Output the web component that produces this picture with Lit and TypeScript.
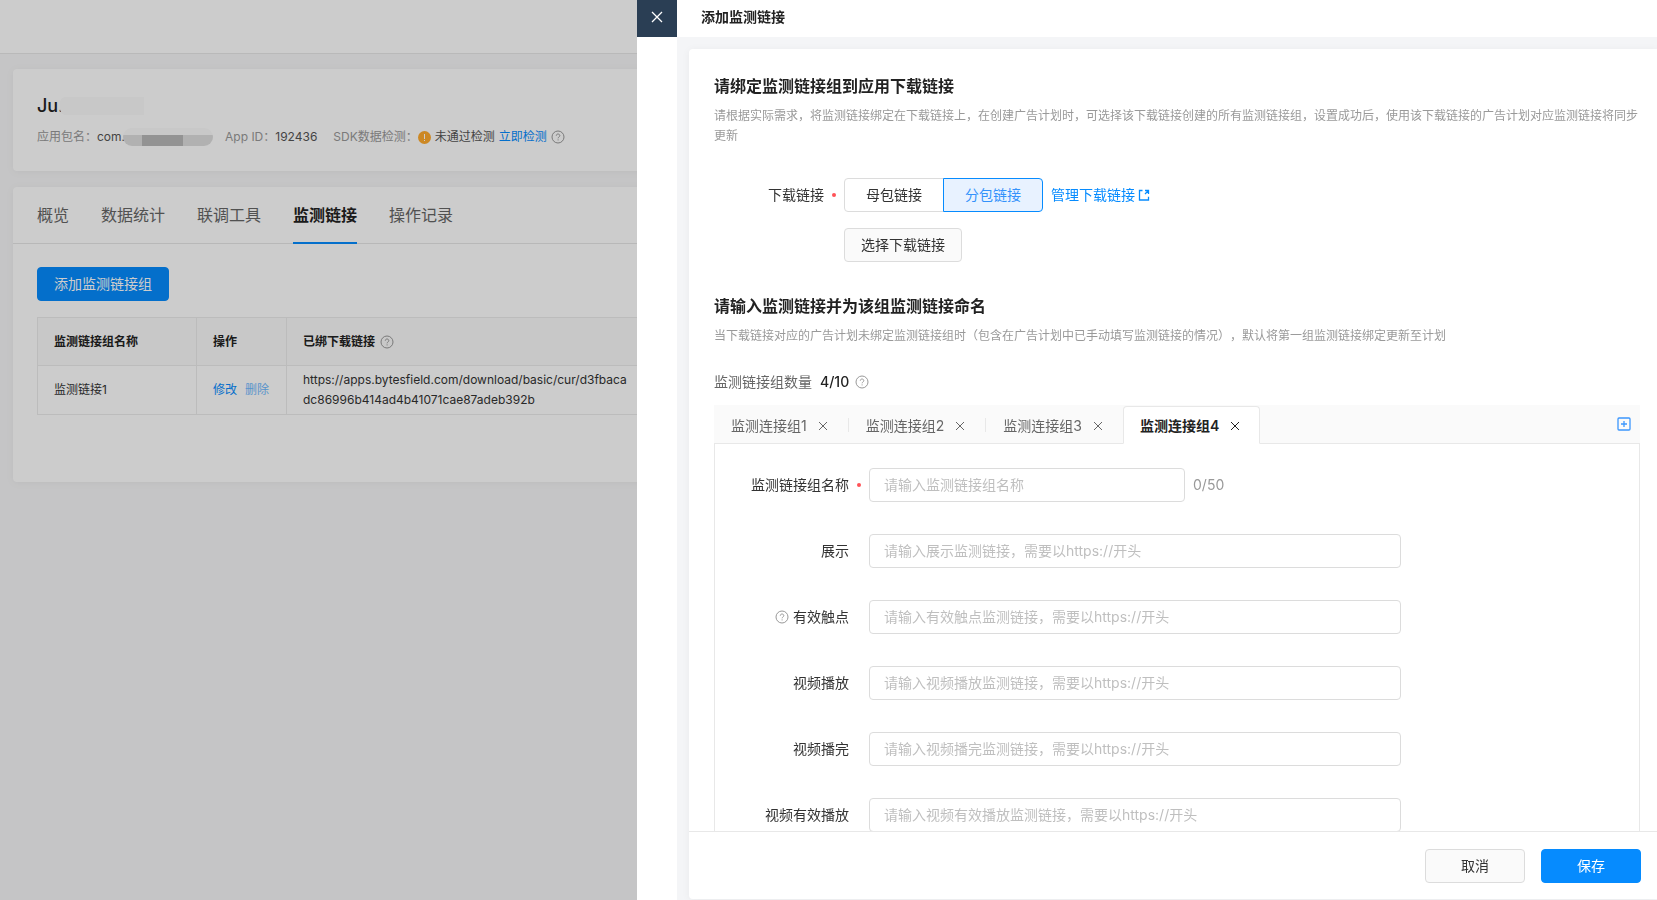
import { LitElement, html, css, svg, nothing } from "lit";
import { customElement, property, state } from "lit/decorators.js";
import { classMap } from "lit/directives/class-map.js";

const icons = {
  help: svg`<circle cx="7" cy="7" r="6"/><path d="M5.300 5.700c0-2.300 3.500-2.200 3.500 0 0 1.200-1.700 1.300-1.700 2.600"/><path d="M7.100 9.400v1"/>`,
  cross: svg`<path d="M3 3l8 8M11 3l-8 8"/>`,
  external: svg`<path d="M5.500 2.500H2.500v9.500h9V8.800"/><path d="M8 2.500h3.500V6M11.500 2.500L8 6"/>`,
  add: svg`<rect x="1" y="1" width="12" height="12" rx="1"/><path d="M7 4v6M4 7h6"/>`,
};

const shared = css`
  * {
    box-sizing: border-box;
  }
  button,
  input {
    font: inherit;
    color: inherit;
    margin: 0;
  }
  button {
    cursor: pointer;
  }
  a {
    color: #068bfe;
    text-decoration: none;
  }
  h1,
  h2,
  p {
    margin: 0;
  }
  .btn {
    height: 34px;
    padding: 0 16px;
    border: 1px solid #dcdcdc;
    border-radius: 4px;
    background: #fafafa;
    color: #333;
    font-size: 14px;
    white-space: nowrap;
  }
  .btn.primary {
    border-color: #068bfe;
    background: #068bfe;
    color: #fff;
  }
`;

@customElement("ui-icon")
class UiIcon extends LitElement {
  @property() name: keyof typeof icons = "help";
  static styles = css`
    :host {
      display: inline-flex;
      flex: none;
    }
    svg {
      width: 14px;
      height: 14px;
      fill: none;
      stroke: currentColor;
      stroke-width: 1;
    }
    .add,
    .external {
      stroke-width: 1.3;
    }
  `;
  render() {
    return html`<svg class=${this.name} viewBox="0 0 14 14" aria-hidden="true">${icons[this.name]}</svg>`;
  }
}

@customElement("app-detail")
class AppDetail extends LitElement {
  static styles = [
    shared,
    css`
      :host {
        display: block;
        min-height: 100vh;
        background: #f7f7f8;
      }
      .topbar {
        height: 54px;
        background: #fff;
        border-bottom: 1px solid #e8e8e8;
      }
      .content {
        display: flex;
        flex-direction: column;
        gap: 16px;
        padding: 15px 13px;
      }
      .card {
        background: #fff;
        border-radius: 4px;
        box-shadow: 0 1px 8px rgba(0, 0, 0, 0.05);
      }
      .summary {
        padding: 24px 24px 16px;
      }
      .name {
        display: flex;
        align-items: center;
        height: 26px;
        color: #222;
        font-size: 18px;
        font-weight: 500;
      }
      .mask {
        width: 84px;
        height: 18px;
        margin-left: -4px;
        border-radius: 6px 0 0 6px;
        background: #fafafa;
      }
      .facts {
        display: flex;
        align-items: center;
        height: 36px;
        gap: 12px;
        font-size: 12px;
        color: #999;
        white-space: nowrap;
      }
      .fact {
        display: flex;
        align-items: center;
      }
      .fact + .fact + .fact {
        margin-left: 4px;
      }
      .value {
        color: #555;
      }
      .redacted {
        display: flex;
        align-items: flex-end;
        width: 90px;
        height: 18px;
        margin-left: -2px;
        border-radius: 9px;
        overflow: hidden;
        background: linear-gradient(#fafafa 7px, #dedede 7px);
      }
      .redacted .dark {
        width: 41px;
        height: 11px;
        margin-left: 19px;
        background: #b8b8b8;
      }
      .warn {
        width: 13px;
        height: 13px;
        margin-right: 4px;
      }
      .fact a {
        margin: 0 4px;
      }
      .tabs {
        display: flex;
        gap: 32px;
        height: 57px;
        padding: 0 24px;
        border-bottom: 1px solid #e6e6e6;
      }
      .tab {
        height: 57px;
        padding: 0;
        border: 0;
        border-bottom: 2px solid transparent;
        background: none;
        color: #666;
        font-size: 16px;
      }
      .tab.active {
        border-color: #068bfe;
        color: #222;
        font-weight: 600;
      }
      .panel {
        padding: 23px 24px 67px;
      }
      table {
        width: 100%;
        margin-top: 16px;
        border-collapse: collapse;
        table-layout: fixed;
        font-size: 12px;
        line-height: 20px;
        color: #333;
      }
      th,
      td {
        border: 1px solid #ebebeb;
        padding: 4px 16px;
        text-align: left;
      }
      th {
        height: 48px;
        background: #fafafa;
        color: #222;
        font-weight: 600;
      }
      td {
        height: 49px;
        word-break: break-all;
      }
      .c-name {
        width: 159px;
      }
      .c-ops {
        width: 90px;
      }
      .c-link {
        width: 359px;
      }
      .head {
        display: flex;
        align-items: center;
        gap: 5px;
      }
      .head ui-icon {
        color: #999;
      }
      .ops {
        display: flex;
        gap: 8px;
      }
      .faded {
        opacity: 0.6;
      }
    `,
  ];
  render() {
    const tabs = ["概览", "数据统计", "联调工具", "监测链接", "操作记录"];
    return html`
      <header class="topbar"></header>
      <main class="content">
        <section class="card summary">
          <h1 class="name">Ju.<span class="mask"></span></h1>
          <div class="facts">
            <span class="fact">应用包名：<span class="value">com.</span><span class="redacted"><span class="dark"></span></span></span>
            <span class="fact">App ID：<span class="value">192436</span></span>
            <span class="fact"
              ><span>SDK数据检测：</span>
              <svg class="warn" viewBox="0 0 13 13" aria-hidden="true">
                <circle cx="6.5" cy="6.5" r="6.5" fill="#ffab2e" />
                <path d="M6.500 3v5M6.500 9v1" stroke="#fff" stroke-width="1" />
              </svg>
              <span class="value">未通过检测</span><a href="#check">立即检测</a><ui-icon name="help"></ui-icon>
            </span>
          </div>
        </section>
        <section class="card">
          <nav class="tabs">
            ${tabs.map((t) => html`<button class=${classMap({ tab: true, active: t === "监测链接" })}>${t}</button>`)}
          </nav>
          <div class="panel">
            <button class="btn primary">添加监测链接组</button>
            <table>
              <colgroup>
                <col class="c-name" />
                <col class="c-ops" />
                <col class="c-link" />
                <col />
              </colgroup>
              <thead>
                <tr>
                  <th>监测链接组名称</th>
                  <th>操作</th>
                  <th><span class="head">已绑下载链接<ui-icon name="help"></ui-icon></span></th>
                  <th></th>
                </tr>
              </thead>
              <tbody>
                <tr>
                  <td>监测链接1</td>
                  <td><span class="ops"><a href="#edit">修改</a><a class="faded" href="#delete">删除</a></span></td>
                  <td>https://apps.bytesfield.com/download/basic/cur/d3fbacadc86996b414ad4b41071cae87adeb392b</td>
                  <td></td>
                </tr>
              </tbody>
            </table>
          </div>
        </section>
      </main>
    `;
  }
}

interface Field {
  id: string;
  label: string;
  help?: boolean;
}

const fields: Field[] = [
  { id: "show", label: "展示" },
  { id: "touch", label: "有效触点", help: true },
  { id: "play", label: "视频播放" },
  { id: "done", label: "视频播完" },
  { id: "valid", label: "视频有效播放" },
];

@customElement("link-drawer")
class LinkDrawer extends LitElement {
  @state() private group = 4;
  @state() private source = "分包链接";
  static styles = [
    shared,
    css`
      :host {
        display: flex;
        width: 1020px;
        max-width: 100%;
        height: 100%;
        background: #fff;
      }
      .rail {
        flex: none;
        width: 40px;
      }
      .close {
        display: flex;
        align-items: center;
        justify-content: center;
        width: 40px;
        height: 37px;
        padding: 0 0 3px;
        border: 0;
        background: #2a3e54;
        color: #fff;
      }
      .close svg {
        width: 12px;
        height: 12px;
        stroke: currentColor;
        stroke-width: 1.3;
      }
      .main {
        display: flex;
        flex: 1;
        flex-direction: column;
        min-width: 0;
      }
      .title {
        flex: none;
        height: 37px;
        padding: 0 24px;
        font-size: 14px;
        line-height: 34px;
        font-weight: 600;
        color: #222;
      }
      .body {
        display: flex;
        flex: 1;
        min-height: 0;
        padding: 12px 0 1px 12px;
        background: #f4f5f7;
      }
      .sheet {
        display: flex;
        flex: 1;
        flex-direction: column;
        min-width: 0;
        background: #fff;
        border-radius: 4px 0 0 4px;
        box-shadow: 0 1px 8px rgba(0, 0, 0, 0.05);
      }
      .scroll {
        flex: 1;
        min-height: 0;
        overflow-y: auto;
        scrollbar-width: none;
        padding: 25px 17px 24px 25px;
      }
      h2 {
        font-size: 16px;
        line-height: 24px;
        font-weight: 600;
        color: #222;
      }
      .note {
        margin-top: 8px;
        font-size: 12px;
        line-height: 20px;
        color: #999;
      }
      .row {
        display: flex;
        align-items: center;
        min-height: 34px;
      }
      .label {
        display: flex;
        flex: none;
        align-items: center;
        justify-content: flex-end;
        gap: 4px;
        width: 110px;
      }
      .label ui-icon {
        color: #999;
      }
      .dot {
        flex: none;
        width: 4px;
        height: 4px;
        margin: 0 8px;
        border-radius: 50%;
      }
      .dot.on {
        background: #ff5257;
      }
      .source {
        display: flex;
        flex-direction: column;
        gap: 16px;
        padding: 32px 0;
      }
      .seg {
        width: 100px;
        height: 34px;
        padding: 0;
        border: 1px solid #dcdcdc;
        border-radius: 4px 0 0 4px;
        background: #fff;
      }
      .seg + .seg {
        margin-left: -1px;
        border-radius: 0 4px 4px 0;
      }
      .seg.active {
        z-index: 1;
        border-color: #068bfe;
        background: #e8f2ff;
        color: #3492fb;
      }
      .manage {
        display: flex;
        align-items: center;
        gap: 2px;
        margin-left: 8px;
      }
      .indent {
        padding-left: 130px;
      }
      .count {
        display: flex;
        align-items: center;
        gap: 6px;
        height: 22px;
        margin: 25px 0 12px;
        color: #666;
      }
      .count .total {
        color: #222;
        font-weight: 500;
        margin-left: 2px;
      }
      .count ui-icon {
        color: #999;
      }
      .tabbar {
        display: flex;
        align-items: flex-end;
        height: 39px;
        background: #fafafa;
        box-shadow: inset 0 -1px #e8e8e8;
      }
      .tab {
        display: flex;
        align-items: center;
        gap: 8px;
        height: 38px;
        padding: 2px 16px 0;
        border: 1px solid transparent;
        color: #666;
      }
      .tab button {
        display: flex;
        padding: 0;
        border: 0;
        background: none;
      }
      .tab .x {
        width: 16px;
        justify-content: center;
      }
      .tab.active {
        border-color: #e8e8e8;
        border-bottom-color: #fff;
        border-radius: 4px 4px 0 0;
        background: #fff;
        color: #222;
        font-weight: 600;
      }
      .sep {
        width: 1px;
        height: 14px;
        margin-bottom: 12px;
        background: #e8e8e8;
      }
      .plus {
        display: flex;
        align-self: center;
        margin-left: auto;
        padding: 0 9px 2px;
        border: 0;
        background: none;
        color: #3c97fd;
      }
      .panel {
        display: flex;
        flex-direction: column;
        gap: 32px;
        padding: 24px;
        border: 1px solid #e8e8e8;
        border-top: 0;
      }
      .field {
        width: 532px;
        min-width: 0;
        height: 34px;
        padding: 0 14px 2px;
        border: 1px solid #dcdcdc;
        border-radius: 4px;
        background: #fff;
        outline: none;
      }
      .field.short {
        width: 316px;
      }
      .field::placeholder {
        color: #bfbfbf;
        opacity: 1;
      }
      .limit {
        margin-left: 8px;
        color: #999;
      }
      .footer {
        display: flex;
        flex: none;
        align-items: center;
        justify-content: flex-end;
        gap: 16px;
        height: 68px;
        padding: 0 16px;
        border-top: 1px solid #e8e8e8;
      }
      .footer .btn {
        width: 100px;
      }
    `,
  ];
  render() {
    return html`
      <div class="rail">
        <button class="close" aria-label="关闭">
          <svg viewBox="0 0 12 12"><path d="M1 1l10 10M11 1L1 11" /></svg>
        </button>
      </div>
      <div class="main">
        <div class="title">添加监测链接</div>
        <div class="body">
          <form class="sheet" @submit=${(e: Event) => e.preventDefault()}>
            <div class="scroll">
              <h2>请绑定监测链接组到应用下载链接</h2>
              <p class="note">
                请根据实际需求，将监测链接绑定在下载链接上，在创建广告计划时，可选择该下载链接创建的所有监测链接组，设置成功后，使用该下载链接的广告计划对应监测链接将同步更新
              </p>
              <div class="source">
                <div class="row">
                  <span class="label">下载链接</span><span class="dot on"></span>
                  ${["母包链接", "分包链接"].map(
                    (s) => html`<button
                      type="button"
                      class=${classMap({ seg: true, active: s === this.source })}
                      @click=${() => (this.source = s)}
                    >
                      ${s}
                    </button>`
                  )}
                  <a class="manage" href="#manage">管理下载链接<ui-icon name="external"></ui-icon></a>
                </div>
                <div class="indent"><button type="button" class="btn">选择下载链接</button></div>
              </div>
              <h2>请输入监测链接并为该组监测链接命名</h2>
              <p class="note">
                当下载链接对应的广告计划未绑定监测链接组时（包含在广告计划中已手动填写监测链接的情况），默认将第一组监测链接绑定更新至计划
              </p>
              <div class="count">监测链接组数量<span class="total">4/10</span><ui-icon name="help"></ui-icon></div>
              <div class="tabbar">
                ${[1, 2, 3, 4].map(
                  (n) => html`<div class=${classMap({ tab: true, active: n === this.group })}>
                      <button type="button" @click=${() => (this.group = n)}>监测连接组${n}</button>
                      <button type="button" class="x" aria-label="移除"><ui-icon name="cross"></ui-icon></button>
                    </div>
                    ${n < 3 ? html`<span class="sep"></span>` : nothing}`
                )}
                <button type="button" class="plus" aria-label="添加"><ui-icon name="add"></ui-icon></button>
              </div>
              <div class="panel">
                <div class="row">
                  <label class="label" for="name">监测链接组名称</label><span class="dot on"></span>
                  <input class="field short" id="name" placeholder="请输入监测链接组名称" />
                  <span class="limit">0/50</span>
                </div>
                ${fields.map(
                  (f) => html`<div class="row">
                    <label class="label" for=${f.id}>${f.help ? html`<ui-icon name="help"></ui-icon>` : nothing}${f.label}</label>
                    <span class="dot"></span>
                    <input class="field" id=${f.id} placeholder="请输入${f.label}监测链接，需要以https://开头" />
                  </div>`
                )}
              </div>
            </div>
            <div class="footer">
              <button type="button" class="btn">取消</button>
              <button class="btn primary">保存</button>
            </div>
          </form>
        </div>
      </div>
    `;
  }
}

@customElement("app-root")
class AppRoot extends LitElement {
  static styles = css`
    :host {
      display: block;
      height: 100vh;
      overflow: hidden;
      font-family: Inter, "Noto Sans CJK SC", sans-serif;
      font-size: 14px;
      line-height: 20px;
      text-spacing-trim: space-all;
      color: #333;
    }
    .overlay {
      position: fixed;
      inset: 0;
      display: flex;
      justify-content: flex-end;
      background: rgba(0, 0, 0, 0.2);
    }
  `;
  render() {
    return html`
      <app-detail></app-detail>
      <div class="overlay"><link-drawer></link-drawer></div>
    `;
  }
}
